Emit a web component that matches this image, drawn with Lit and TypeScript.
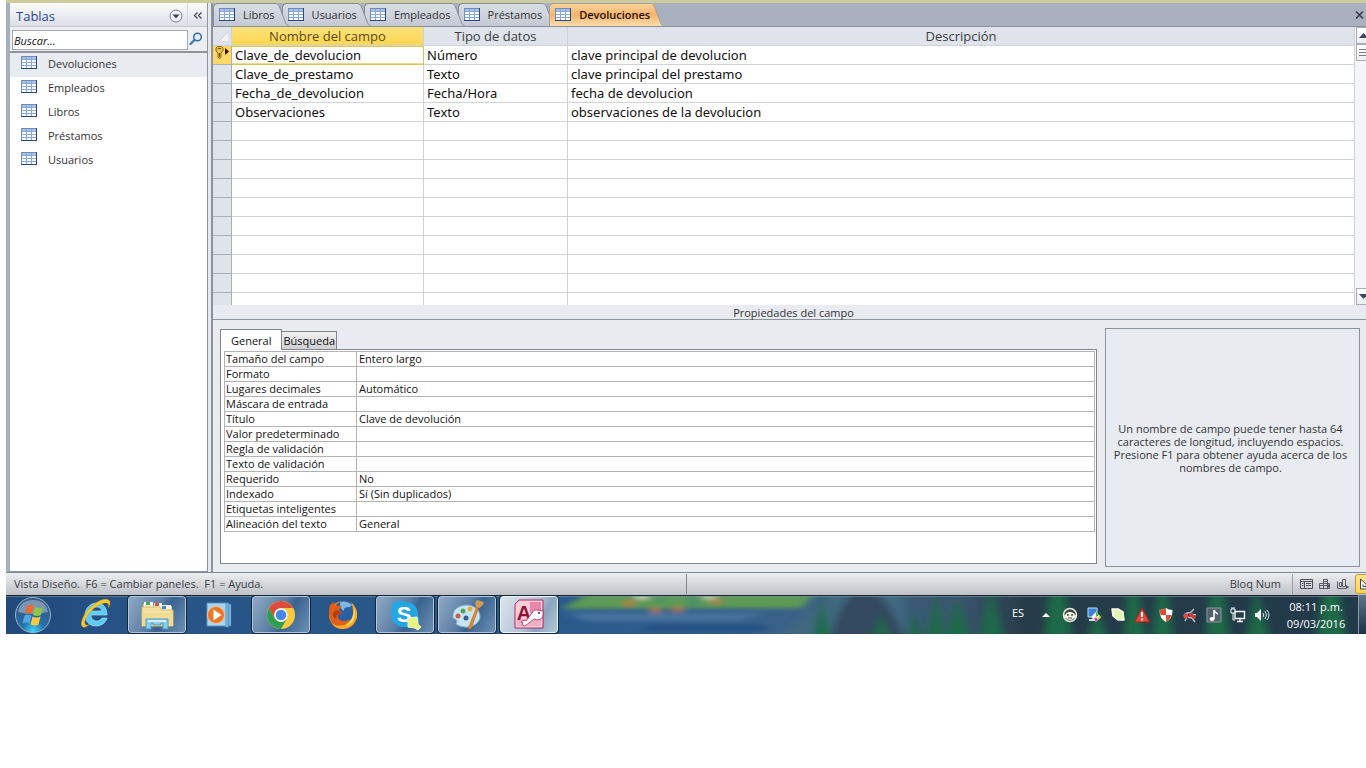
import { LitElement, html, css, svg, nothing, TemplateResult } from 'lit';
import { customElement, property, state } from 'lit/decorators.js';
import { classMap } from 'lit/directives/class-map.js';
import { styleMap } from 'lit/directives/style-map.js';

const tableIcon = html`
  <svg class="table-icon" width="16" height="13" viewBox="0 0 16 13" aria-hidden="true">
    <rect width="16" height="13" fill="#fbfdff" />
    <path d="M0 0h16v3H0z" fill="#a9c0e3" />
    <path d="M0 .5h16M.5 0v12" stroke="#6d8cc0" />
    <path d="M1 3.500h14M1 6.500h14M1 9.500h14M5.500 1v11M10.500 1v11" stroke="#8aa8d8" />
    <path d="M0 12.500h16M15.500 0v13" stroke="#274780" />
  </svg>
`;

const NAV_ITEMS = ['Devoluciones', 'Empleados', 'Libros', 'Préstamos', 'Usuarios'];

const DOC_TABS = ['Libros', 'Usuarios', 'Empleados', 'Préstamos', 'Devoluciones'];

const FIELDS = [
  { name: 'Clave_de_devolucion', type: 'Número', desc: 'clave principal de devolucion' },
  { name: 'Clave_de_prestamo', type: 'Texto', desc: 'clave principal del prestamo' },
  { name: 'Fecha_de_devolucion', type: 'Fecha/Hora', desc: 'fecha de devolucion' },
  { name: 'Observaciones', type: 'Texto', desc: 'observaciones de la devolucion' },
];

const EMPTY_ROWS = 10;

const PROPS = [
  { label: 'Tamaño del campo', value: 'Entero largo' },
  { label: 'Formato', value: '' },
  { label: 'Lugares decimales', value: 'Automático' },
  { label: 'Máscara de entrada', value: '' },
  { label: 'Título', value: 'Clave de devolución' },
  { label: 'Valor predeterminado', value: '' },
  { label: 'Regla de validación', value: '' },
  { label: 'Texto de validación', value: '' },
  { label: 'Requerido', value: 'No' },
  { label: 'Indexado', value: 'Sí (Sin duplicados)' },
  { label: 'Etiquetas inteligentes', value: '' },
  { label: 'Alineación del texto', value: 'General' },
];

@customElement('nav-pane')
export class NavPane extends LitElement {
  @state() private _selected = 'Devoluciones';

  render(): TemplateResult {
    return html`
      <div class="head">
        <h2>Tablas</h2>
        <button class="menu" aria-label="Filtrar tablas">
          <svg width="14" height="14" viewBox="0 0 14 14">
            <circle cx="7" cy="7" r="6" fill="#eef0f4" stroke="#7d828c" />
            <path d="M3.500 5.500h7L7 9.500z" fill="#3c4454" />
          </svg>
        </button>
        <button class="collapse" aria-label="Contraer panel">
          <svg width="10" height="9" viewBox="0 0 10 9">
            <path d="M4.500 1.500 1.500 4.500l3 3M8.500 1.500 5.500 4.500l3 3" fill="none" stroke="#3c4454" stroke-width="1.200" />
          </svg>
        </button>
      </div>
      <div class="search">
        <input type="text" placeholder="Buscar..." aria-label="Buscar" />
        <button aria-label="Buscar tabla">
          <svg width="14" height="14" viewBox="0 0 14 14">
            <path d="M1.500 12 5.500 8" stroke="#4a78b4" stroke-width="2.400" stroke-linecap="round" />
            <circle cx="8.500" cy="5" r="3.800" fill="#e4f0fb" stroke="#3a6aa8" stroke-width="1.500" />
          </svg>
        </button>
      </div>
      <nav>
        ${NAV_ITEMS.map(item => html`
          <button
            class=${classMap({ item: true, selected: item === this._selected })}
            @click=${() => (this._selected = item)}
          >
            ${tableIcon}<span>${item}</span>
          </button>
        `)}
      </nav>
    `;
  }

  static styles = css`
    :host {
      display: flex;
      flex-direction: column;
      background: #fff;
      border: 1px solid #8e949f;
      border-left: 4px solid #a7aebd;
      border-top: 0;
    }

    button {
      font: inherit;
      color: inherit;
      background: none;
      border: 0;
      padding: 0;
      display: flex;
      align-items: center;
      justify-content: center;
    }

    .head {
      display: flex;
      align-items: stretch;
      height: 24px;
      background: linear-gradient(#fbfbfc, #dcdfe6);
      border-bottom: 1px solid #c2c7d0;
      box-sizing: border-box;
    }

    h2 {
      flex: 1;
      margin: 0;
      padding-left: 6px;
      font-size: 13px;
      font-weight: 400;
      line-height: 26px;
      color: #24478f;
    }

    .menu,
    .collapse {
      padding-top: 2px;
    }

    .menu {
      width: 22px;
    }

    .collapse {
      width: 20px;
      border-left: 1px solid #d5d8de;
    }

    .search {
      display: flex;
      height: 24px;
      padding: 3px 3px 1px 2px;
      box-sizing: border-box;
      background: #eceef2;
    }

    .search input {
      flex: 1;
      min-width: 0;
      box-sizing: border-box;
      border: 1px solid #a3a9b4;
      padding: 0 1px;
      font: italic 11px 'Open Sans', sans-serif;
      background: #fff;
    }

    .search input::placeholder {
      color: #111;
      opacity: 1;
    }

    .search button {
      width: 16px;
      padding-bottom: 2px;
    }

    nav {
      display: flex;
      flex-direction: column;
      border-top: 2px solid #8d929b;
    }

    .item {
      justify-content: flex-start;
      gap: 11px;
      height: 24px;
      padding: 0 0 4px 11px;
      color: #333;
    }

    .item.selected {
      background: #e8ebf0;
    }

    .item .table-icon {
      margin-bottom: 2px;
    }
  `;
}

@customElement('doc-tabs')
export class DocTabs extends LitElement {
  @property() public active = 'Devoluciones';

  render(): TemplateResult {
    return html`
      <div class="tabs" role="tablist">
        ${DOC_TABS.map((tab, i) => {
          const active = tab === this.active;
          return html`
            <button
              role="tab"
              aria-selected=${active}
              class=${classMap({ tab: true, active })}
              style=${styleMap({ zIndex: active ? '20' : String(10 - i) })}
              @click=${() => (this.active = tab)}
            >
              <span class="body">${tableIcon}<span>${tab}</span></span>
              <svg class="edge" width="14" height="23" viewBox="0 0 14 23" aria-hidden="true">
                <defs>
                  <linearGradient id="g${i}" x2="0" y2="1">
                    ${active
                      ? svg`<stop offset="0" stop-color="#fbd3a0" /><stop offset=".5" stop-color="#f8b469" /><stop offset="1" stop-color="#fddcae" />`
                      : svg`<stop offset="0" stop-color="#d9dde5" /><stop offset="1" stop-color="#c4c9d3" />`}
                  </linearGradient>
                </defs>
                <path d="M0 0c3 0 4 2 5.500 6l4 11c1 3 2.500 6 4.500 6H0z" fill="url(#g${i})" />
                <path d="M0 .5c3 0 4 2 5.500 6l4 10.500c1 3 2.500 6 4.500 6" fill="none" stroke=${active ? '#a4a09c' : '#858c99'} />
              </svg>
            </button>
          `;
        })}
      </div>
      <button class="close" aria-label="Cerrar">
        <svg width="9" height="8" viewBox="0 0 9 8">
          <path d="M1 .500l7 7M8 .500l-7 7" stroke="#343b47" stroke-width="1.500" />
        </svg>
      </button>
    `;
  }

  static styles = css`
    :host {
      display: flex;
      justify-content: space-between;
      height: 24px;
      box-sizing: border-box;
      background: #a9b1c0;
      border-bottom: 1px solid #8b919c;
    }

    button {
      font: inherit;
      color: #333;
      background: none;
      border: 0;
      padding: 0;
    }

    .tabs {
      display: flex;
    }

    .tab {
      display: flex;
      position: relative;
      margin-right: -7px;
    }

    .tab.active {
      color: #1c1008;
      font-weight: 600;
    }

    .body {
      display: flex;
      align-items: center;
      gap: 8px;
      height: 23px;
      box-sizing: border-box;
      padding: 0 0 1px 5px;
      background: linear-gradient(#d9dde5, #c4c9d3);
      border: 1px solid #858c99;
      border-width: 1px 0 0 1px;
      border-top-left-radius: 5px;
    }

    .active .body {
      background: linear-gradient(#fbd3a0, #f8b469 50%, #fddcae);
      border-color: #a4a09c;
    }

    .close {
      display: flex;
      align-items: center;
      padding-right: 2px;
    }
  `;
}

@customElement('field-grid')
export class FieldGrid extends LitElement {
  render(): TemplateResult {
    return html`
      <div class="scroller">
        <table>
          <colgroup>
            <col class="c-sel" /><col class="c-name" /><col class="c-type" /><col />
          </colgroup>
          <thead>
            <tr>
              <th class="corner" aria-label="Seleccionar todo">
                <svg width="11" height="11" viewBox="0 0 11 11"><path d="M11 0v11H0z" fill="#f2f4f7" stroke="#c9cdd6" /></svg>
              </th>
              <th class="current">Nombre del campo</th>
              <th>Tipo de datos</th>
              <th>Descripción</th>
            </tr>
          </thead>
          <tbody>
            ${FIELDS.map((f, i) => html`
              <tr class=${i === 0 ? 'current-row' : nothing}>
                <td class="sel">${i === 0 ? this._keyMark() : nothing}</td>
                <td>${f.name}</td>
                <td>${f.type}</td>
                <td>${f.desc}</td>
              </tr>
            `)}
            ${Array.from({ length: EMPTY_ROWS }, () => html`
              <tr><td class="sel"></td><td></td><td></td><td></td></tr>
            `)}
          </tbody>
        </table>
      </div>
      <div class="scrollbar">
        <button aria-label="Subir">
          <svg width="9" height="5" viewBox="0 0 9 5"><path d="M0 5 4.500 0 9 5z" fill="#3b4763" /></svg>
        </button>
        <button class="thumb" aria-label="Desplazar">
          <svg width="9" height="7" viewBox="0 0 9 7"><path d="M0 .5h9M0 3.500h9M0 6.500h9" stroke="#777d88" /></svg>
        </button>
        <span class="track"></span>
        <button aria-label="Bajar">
          <svg width="9" height="5" viewBox="0 0 9 5"><path d="M0 0h9L4.500 5z" fill="#3b4763" /></svg>
        </button>
      </div>
    `;
  }

  private _keyMark(): TemplateResult {
    return html`
      <svg width="16" height="14" viewBox="0 0 16 14" aria-label="Clave principal">
        <path d="M2.500 .5h4l1.500 1.500v3L6 7v4.500l-1.500 1L3 11V7L1 5V2z" fill="#e9c04a" stroke="#8b6612" />
        <path d="M3 2.500h3M4.500 7v4" stroke="#6d4e0b" />
        <path d="M10 2v7l4-3.500z" fill="#3a0d0d" />
      </svg>
    `;
  }

  static styles = css`
    :host {
      display: flex;
      height: 278px;
      background: #fff;
      font-size: 13px;
    }

    .scroller {
      flex: 1;
      min-width: 0;
      overflow: hidden;
    }

    table {
      width: 100%;
      table-layout: fixed;
      border-collapse: separate;
      border-spacing: 0;
    }

    tbody {
      font-family: 'Noto Sans', sans-serif;
    }

    .c-sel {
      width: 19px;
    }

    .c-name {
      width: 192px;
    }

    .c-type {
      width: 144px;
    }

    th,
    td {
      box-sizing: border-box;
      height: 19px;
      line-height: 18px;
      padding: 0 3px;
      border-right: 1px solid #ced2da;
      border-bottom: 1px solid #d0d3d8;
      white-space: nowrap;
      color: #111;
    }

    th {
      background: #dfe3ea;
      color: #3a3d44;
      font-weight: 400;
      text-align: center;
    }

    th.current {
      background: linear-gradient(#fbe27c, #ffd64f);
      color: #5a4a20;
    }

    .corner,
    .sel {
      padding: 0;
      background: #dfe3ea;
      border-color: #a9aeb9;
      line-height: 0;
    }

    .corner {
      border-color: #ced2da;
      padding-left: 3px;
    }

    .current-row .sel {
      background: #ffd966;
      padding-left: 2px;
      vertical-align: top;
    }

    .current-row td:nth-child(2) {
      border-color: #d8c65a;
      box-shadow: inset 0 -1px #e8dc98, inset 0 1px #d8c65a;
    }

    .scrollbar {
      display: flex;
      flex-direction: column;
      width: 11px;
      overflow: hidden;
      background: #f3f5f8;
      padding-left: 1px;
      box-sizing: border-box;
    }

    .scrollbar button {
      display: flex;
      align-items: center;
      width: 17px;
      height: 17px;
      padding: 0 2px;
      box-sizing: border-box;
      background: linear-gradient(#fff, #eceef2);
      border: 1px solid #a9adb6;
    }

    .track {
      flex: 1;
    }
  `;
}

@customElement('field-properties')
export class FieldProperties extends LitElement {
  @state() private _tab = 'General';

  render(): TemplateResult {
    return html`
      <h3>Propiedades del campo</h3>
      <div class="area">
        <section>
          <div class="tabs" role="tablist">
            ${['General', 'Búsqueda'].map(t => html`
              <button
                role="tab"
                aria-selected=${t === this._tab}
                class=${classMap({ on: t === this._tab })}
                @click=${() => (this._tab = t)}
              >${t}</button>
            `)}
          </div>
          <div class="box">
            <table>
              <tbody>
                ${PROPS.map((p, i) => html`
                  <tr>
                    <th scope="row"><label for="p${i}">${p.label}</label></th>
                    <td><input id="p${i}" type="text" .value=${p.value} /></td>
                  </tr>
                `)}
              </tbody>
            </table>
          </div>
        </section>
        <aside>
          <p>
            Un nombre de campo puede tener hasta 64 caracteres de longitud,
            incluyendo espacios. Presione F1 para obtener ayuda acerca de los
            nombres de campo.
          </p>
        </aside>
      </div>
    `;
  }

  static styles = css`
    :host {
      display: flex;
      flex-direction: column;
      background: #e8ebf0;
      color: #333;
    }

    h3 {
      margin: 0;
      height: 14px;
      line-height: 16px;
      font-size: 11px;
      font-weight: 400;
      text-align: center;
      border-bottom: 1px solid #8b939c;
      padding-left: 8px;
    }

    .area {
      flex: 1;
      display: flex;
      gap: 8px;
      padding: 8px 6px 5px 7px;
    }

    section {
      flex: 1;
      min-width: 0;
      display: flex;
      flex-direction: column;
      padding: 1px 0 3px;
    }

    .tabs {
      display: flex;
      align-items: flex-end;
      height: 20px;
    }

    .tabs button {
      height: 18px;
      padding: 0 1px;
      font: inherit;
      line-height: 17px;
      color: #111;
      background: linear-gradient(#f0f0f1, #cfd0d2);
      border: 1px solid #80878f;
      border-width: 1px 1px 0 0;
    }

    .tabs button.on {
      height: 21px;
      padding: 0 10px;
      margin-bottom: -1px;
      line-height: 19px;
      background: #fff;
      border-left-width: 1px;
      position: relative;
    }

    .box {
      flex: 1;
      padding: 1px 1px 31px 3px;
      background: #fff;
      border: 1px solid #80878f;
    }

    table {
      width: 100%;
      table-layout: fixed;
      border-collapse: separate;
      border-spacing: 0;
      border: 1px solid #b4b4b4;
      border-bottom: 0;
      box-sizing: border-box;
    }

    th,
    td {
      height: 15px;
      box-sizing: border-box;
      padding: 0 2px 0 1px;
      line-height: 14px;
      border-bottom: 1px solid #b4b4b4;
      font-weight: 400;
      text-align: left;
      white-space: nowrap;
      color: #111;
    }

    th {
      width: 132px;
      border-right: 1px solid #b4b4b4;
    }

    input {
      display: block;
      width: 100%;
      height: 14px;
      box-sizing: border-box;
      border: 0;
      padding: 0 1px;
      font: inherit;
      line-height: 14px;
      color: inherit;
      background: none;
    }

    aside {
      flex: 0 0 255px;
      box-sizing: border-box;
      display: flex;
      align-items: center;
      padding: 0 8px 0 4px;
      border: 1px solid #8b939c;
    }

    p {
      flex: 1;
      margin: 0;
      line-height: 13px;
      text-align: center;
    }
  `;
}

@customElement('status-bar')
export class StatusBar extends LitElement {
  render(): TemplateResult {
    return html`
      <span class="view">Vista Diseño.&nbsp; F6 = Cambiar paneles.&nbsp; F1 = Ayuda.</span>
      <span class="locks">Bloq Num</span>
      <div class="views">
        <button aria-label="Vista Hoja de datos">
          <svg width="13" height="12" viewBox="0 0 13 12"><path d="M.5 1.500h12v9H.5zM1 3.500h11M4.500 4v6M6 5.500h5M6 7.500h5M2 5.500h1.500M2 7.500h1.500" fill="none" stroke="#4a4f5a" /></svg>
        </button>
        <button aria-label="Vista Tabla dinámica">
          <svg width="12" height="12" viewBox="0 0 12 12"><path d="M4.500 1.500h4v9h-8v-5h10v5h-3M.5 7.500h8M4.500 1v9M4.500 3.500h4" fill="none" stroke="#5a5f69" /><path d="m8 5 3 3-3 3z" fill="#4a4f5a" /></svg>
        </button>
        <button aria-label="Vista Gráfico dinámico">
          <svg width="12" height="12" viewBox="0 0 12 12"><path d="M.5 3.500v7h9M2.500 4.500h2v4h-2zM5.500 1.500h3v7h-3z" fill="none" stroke="#5a5f69" /><path d="m9 7 3 2-3 2z" fill="#4a4f5a" /></svg>
        </button>
        <button class="on" aria-label="Vista Diseño">
          <svg width="16" height="14" viewBox="0 0 16 14"><path d="M1.500 2v10h11z" fill="#f8f8f4" stroke="#3f4654" /><path d="M4 7.500v2h3" fill="none" stroke="#3f4654" /><path d="m6 8 7-6 2 2-7 5z" fill="#5a6270" /></svg>
        </button>
      </div>
    `;
  }

  static styles = css`
    :host {
      display: flex;
      align-items: center;
      height: 23px;
      box-sizing: border-box;
      background: linear-gradient(#eceef0, #bec1c6);
      border-top: 1px solid #7f8a97;
      color: #3a3d44;
      overflow: hidden;
    }

    .view {
      flex: 0 0 50%;
      box-sizing: border-box;
      padding-left: 8px;
      line-height: 20px;
    }

    .locks {
      flex: 1;
      text-align: right;
      padding-right: 11px;
      line-height: 20px;
      border-left: 1px solid #80868f;
    }

    .views {
      display: flex;
      align-items: center;
      box-sizing: border-box;
      width: 74px;
      gap: 6px;
      padding-left: 7px;
      border-left: 1px solid #9a9fa8;
    }

    button {
      display: flex;
      flex: none;
      padding: 0;
      border: 0;
      background: none;
    }

    .on {
      padding: 2px 3px;
      background: linear-gradient(#ffe68f, #ffd350);
      border: 1px solid #c2953a;
      border-radius: 3px;
    }
  `;
}

const APPS = [
  {
    name: 'Internet Explorer',
    open: false,
    icon: svg`
      <path d="M29 18H13c0 4 3 6 6 6 2 0 4-1 5-3h5c-2 6-6 8-11 8-7 0-11-5-11-11S12 6 18 6c8 0 11 5 11 12zm-5-4c-1-3-3-4-5-4-3 0-5 1-6 4z" fill="#5ccbf5" stroke="#b4ecff" stroke-width=".6" />
      <path d="M5 30C1 28 5 17 13 10 21 2 31 0 32 5c.3 2-.6 4-1.500 5.500 1-4-1-5-4-4.500C17 8 5 20 7 27c.5 1.500 2 1.500 4 .5-2 2-4 3-6 2.500z" fill="#f6c92e" stroke="#d59a17" stroke-width=".5" />`,
  },
  {
    name: 'Explorador de Windows',
    open: true,
    icon: svg`
      <path d="M3 7h9l2 2h18v19H3z" fill="#e8cc75" />
      <path d="M4 5h9v7H4zM14 6h8v6h-8zM22 8h9v5h-9z" fill="#f6f8fa" />
      <path d="M6 5h4v3H6z" fill="#4da44a" /><path d="M15 6h4v3h-4z" fill="#d7503c" /><path d="M22 9h4v3h-4z" fill="#3d8cc8" />
      <path d="M2 10h18l2 3h11v16H2z" fill="#f4e3a0" stroke="#d7b95c" />
      <path d="M2 16h31v13H2z" fill="#f0dc94" />
      <path d="M6 32V22h22v10h-5v-6h-2v2h-8v-2h-2v6z" fill="#8fcdec" stroke="#4d9cc6" />
      <path d="M8 23h18v2H8z" fill="#d3f1fc" />`,
  },
  {
    name: 'Reproductor de Windows Media',
    open: false,
    icon: svg`
      <path d="M26 7h3v22h-3zM23 6h4v24h-4z" fill="#87c6ea" stroke="#3e7aa8" stroke-width=".6" />
      <path d="M5 6h19v23H5z" fill="#a7d4ee" stroke="#5a94bc" />
      <circle cx="14" cy="18" r="8.500" fill="#ed7626" stroke="#fac190" />
      <path d="M11.500 12.500v11l8-5.500z" fill="#fff" />`,
  },
  {
    name: 'Google Chrome',
    open: true,
    icon: svg`
      <circle cx="17" cy="18" r="14" fill="#f9ca3e" />
      <path d="M4.900 11A14 14 0 0 1 29.100 11H17a7 7 0 0 0-6 10.500z" fill="#dd4b3e" />
      <path d="M4.900 11 11 21.500A7 7 0 0 0 23 21.500L17 32A14 14 0 0 1 4.900 11z" fill="#2f9e55" />
      <circle cx="17" cy="18" r="6.700" fill="#fff" /><circle cx="17" cy="18" r="5.300" fill="#4687e8" />`,
  },
  {
    name: 'Mozilla Firefox',
    open: false,
    icon: svg`
      <circle cx="17" cy="18" r="14" fill="#ee7a20" />
      <circle cx="19" cy="14" r="10.500" fill="#2a5fa3" />
      <path d="M14 5q7-2 12 3-2 3-5 2-4 1-3 4-4-1-4-9z" fill="#7fb9e2" />
      <path d="M4 8q2-1 3-3 1 3 3 4 4-1 6 1-3 1-3 4l4 2-5 2q-1 5 4 6 4 1 7-2-1 6-6 8-7 1-11-5Q1 16 4 8z" fill="#e25e18" />
      <path d="M25 5q7 6 6 15-3 11-14 12-7 0-11-5 9 4 16-1 6-5 5-12 0-5-2-9z" fill="#f8a927" />
      <path d="M28 12q2 7-1 12-3 4-7 5 8-7 8-17z" fill="#fde06a" />
      <path d="M7 17q1-4 5-4v1l4 2-5 2-1 4q-3-1-3-5z" fill="#b43d12" />`,
  },
  {
    name: 'Skype',
    open: true,
    icon: svg`
      <path d="M4 13Q2 5 10 4q4-1 7 1 9 0 12 7 1 3 1 7 3 5-1 10-5 4-10 1-10 1-14-6-2-4-2-8z" fill="#22a7e5" />
      <text x="16" y="25" text-anchor="middle" font-size="22" font-weight="700" fill="#fff" font-family="Liberation Sans, sans-serif">S</text>
      <path d="m20 21 9-1 1 7 3 3-3 3-3-2-7-1z" fill="#e7f67c" stroke="#f9ffd5" />`,
  },
  {
    name: 'Paint',
    open: true,
    icon: svg`
      <path d="M3 21Q2 12 11 9q10-3 17 4 5 8-2 14-7 5-16 2l-4-2q3-4-3-6z" fill="#c8e4f4" stroke="#86b4d3" />
      <circle cx="8" cy="19" r="2.500" fill="#d4574a" /><circle cx="13" cy="14" r="2.500" fill="#55a653" /><circle cx="20" cy="12" r="2.500" fill="#e5b13c" /><circle cx="16" cy="21" r="2.500" fill="#385f8d" />
      <path d="M18 32 27 9l2 1-8 22z" fill="#e68b2c" stroke="#a75b15" stroke-width=".5" /><path d="M26 10q-2-4 1-7l7 2q-1 4-5 6z" fill="#d19a55" />`,
  },
  {
    name: 'Microsoft Access',
    open: true,
    active: true,
    icon: svg`
      <path d="M7 3h24v28H3V7z" fill="#f8ced9" stroke="#b92563" />
      <path d="M18 5h11v11H18z" fill="#e987a8" />
      <path d="M5 22h24v7H5z" fill="#f0b0c4" />
      <text x="12" y="23" text-anchor="middle" font-size="20" font-weight="700" fill="#8e1238" font-family="Liberation Sans, sans-serif">A</text>
      <path d="M20 16q2-4 6-3l5 1q1 9-6 9l-3-1-9 7-3-1 1-2-2-1 3-2 2 1z" fill="#fff" stroke="#b92563" stroke-width=".8" />
      <circle cx="27" cy="16" r="1" fill="#8e1238" />`,
  },
];

const TRAY = [
  { name: 'Asistente', icon: svg`<circle cx="8" cy="8" r="6.500" fill="#3f463f" stroke="#e8e6dc" stroke-width="1.500" /><path d="M1 8h14l-1 3H2z" fill="#e8e6dc" /><ellipse cx="8" cy="9" rx="5" ry="4" fill="#f4f2e6" /><circle cx="6" cy="8" r="1" fill="#4a4e48" /><circle cx="10" cy="8" r="1" fill="#4a4e48" /><path d="M6 11h4" stroke="#4a4e48" />` },
  { name: 'Gráficos', icon: svg`<path d="M2 1h9v9H2z" fill="#3f82dc" stroke="#bcdcfa" /><path d="M3 12h6v2H3z" fill="#d8dfe8" /><path d="m10 5 5 5-5 5-5-5z" fill="#f4f6dc" /><path d="m10 5 3 3-3 2z" fill="#4caf50" /><path d="m13 8 2 2-3 3z" fill="#e7c031" /><path d="m10 10 2 3-2 2-2-3z" fill="#c34dab" />` },
  { name: 'Ahorro de energía', icon: svg`<path d="M2 2h6l5 3 1 8H8L3 9z" fill="#e2f6ae" stroke="#fafff0" stroke-width="1.500" stroke-linejoin="round" />` },
  { name: 'Advertencia', icon: svg`<path d="M8 1 15.500 15H.5z" fill="#e0483a" stroke="#a82318" /><path d="M7 5h2v5H7zM7 11.500h2v2H7z" fill="#fff" />` },
  { name: 'Seguridad', icon: svg`<path d="M1.500 3q4 0 6.500-2 2.500 2 6.500 2 0 9-6.500 12Q1.500 12 1.500 3z" fill="#fff" /><path d="M1.500 3q4 0 6.500-2v7H2.500zM8 8h5.500Q12 13 8 15z" fill="#e24c35" />` },
  { name: 'Red social', icon: svg`<path d="M2 9q2-4 6-3l4-4M3 14l2-4 5 1 3 4M8 7l6 1" fill="none" stroke="#b9bfc1" stroke-width="1.500" /><circle cx="4" cy="9" r="2.500" fill="#dc4b43" /><circle cx="9" cy="8" r="2" fill="#d13c36" /><circle cx="12" cy="10" r="2" fill="#d13c36" />` },
  { name: 'Audio', icon: svg`<path d="M1 1h14v14H1z" fill="#53616c" stroke="#8a99a5" /><path d="M8 12V3q1 3 4 4" fill="none" stroke="#fff" stroke-width="1.500" /><ellipse cx="6" cy="12" rx="2.500" ry="2" fill="#fff" />` },
  { name: 'Red', icon: svg`<path d="M5 4.500h9.500v7H5zM7 14.500h6M10 12v2" fill="#263c48" stroke="#f4f6f8" stroke-width="1.400" /><path d="M1 2h4v4H1zM3 6v7h2M2 0v2M4 0v2" fill="none" stroke="#f4f6f8" />` },
  { name: 'Volumen', icon: svg`<path d="M1 6h2l4-4v12L3 10H1z" fill="#f7f8f9" /><path d="M9 6q1.500 2 0 4M11 4q3 4 0 8M13 3q4 5 0 10" fill="none" stroke="#dde3e7" />` },
];

@customElement('task-bar')
export class TaskBar extends LitElement {
  render(): TemplateResult {
    return html`
      <svg class="wallpaper" viewBox="0 0 1360 39" preserveAspectRatio="none" aria-hidden="true">
        <defs>
          <linearGradient id="sky"><stop offset="0" stop-color="#21497a" /><stop offset=".1" stop-color="#285488" /><stop offset=".42" stop-color="#2a5a8c" /><stop offset=".58" stop-color="#3b6288" /><stop offset=".7" stop-color="#3c5570" /><stop offset=".75" stop-color="#263c48" /><stop offset="1" stop-color="#22394a" /></linearGradient>
          <filter id="soft" x="-5%" y="-50%" width="110%" height="200%"><feGaussianBlur stdDeviation="4 2" /></filter>
        </defs>
        <path d="M0 0h1360v39H0z" fill="url(#sky)" />
        <g filter="url(#soft)">
          <path d="M555 14 590-6h222l-16 19z" fill="#5c9a55" />
          <path d="M630 0h12v4h-12zM698 0h10v4h-10z" fill="#d6dfc8" />
          <path d="M618 6h10v5h-10zM645 13h9v6h-9zM667 12h9v5h-9zM706 4h8v5h-8z" fill="#c3703a" />
          <path d="M680 2h14v9h-14zM650 3h10v5h-10z" fill="#4a9068" />
          <path d="M560 18h200l-30 8H580z" fill="#46739e" />
          <path d="M640 30h120v6H640z" fill="#235084" />
          <path d="M770 45 810 10 830-5h70v50z" fill="#41677f" />
          <path d="M825 45q10-50 35-50 18 0 40 50z" fill="#30485f" />
          <path d="M806 45 816 2l9 43zM866 45l9-28 9 28zM902 45l6-34 8 34zM920 45l10-48 10 48zM940 45l10-44 16 44zM974 45l10-55 14 55zM1038 45l6-55h14l8 55zM1082 45l8-34 12 34zM1118 45l4-55h10l8 55zM1146 45l6-55h8l8 55zM1200 45l4-45h14l6 45zM1240 45l10-55 14 55zM1310 45l8-55h14l8 55z" fill="#1b6a47" />
        </g>
        <path d="M0 .5h1360" stroke="#18232e" /><path d="M0 1.500h1360" stroke="#8294a3" stroke-opacity=".6" />
      </svg>
      <button class="start" aria-label="Inicio">
        <svg width="38" height="38" viewBox="0 0 38 38">
          <defs><radialGradient id="orb" cy=".95" r=".8"><stop offset="0" stop-color="#41d5fa" /><stop offset=".4" stop-color="#236fa9" /><stop offset="1" stop-color="#365b85" /></radialGradient></defs>
          <circle cx="19" cy="19" r="17.500" fill="url(#orb)" stroke="#9ab5cd" />
          <path d="M4 16Q6 4 19 4t15 12Q19 20 4 16z" fill="#fff" fill-opacity=".35" />
          <path d="M13 10q4-2 7 0l-2 8q-3-2-7 0z" fill="#ea6a32" /><path d="M21 11q4 2 8 0l-2 8q-4 2-8 0z" fill="#91c44a" />
          <path d="M10.500 19.500q3-2 7 0l-2 8q-3-2-7 0z" fill="#53a8e2" /><path d="M18.500 20.500q4 2 8 0l-2 8q-4 2-8 0z" fill="#fbc93d" />
        </svg>
      </button>
      <div class="apps">
        ${APPS.map(app => html`
          <button class=${classMap({ app: true, open: app.open, active: !!app.active })} aria-label=${app.name}>
            <svg width="34" height="36" viewBox="0 0 34 36">${app.icon}</svg>
          </button>
        `)}
      </div>
      <div class="tray">
        <button class="lang" aria-label="Idioma">ES</button>
        <button class="cell" aria-label="Mostrar iconos ocultos">
          <svg width="8" height="4" viewBox="0 0 8 4"><path d="M0 4 4 0l4 4z" fill="#fff" /></svg>
        </button>
        ${TRAY.map(t => html`
          <button class="cell" aria-label=${t.name}><svg width="16" height="16" viewBox="0 0 16 16">${t.icon}</svg></button>
        `)}
        <button class="clock"><span>08:11 p.m.</span><span>09/03/2016</span></button>
        <button class="desktop" aria-label="Mostrar escritorio"></button>
      </div>
    `;
  }

  static styles = css`
    :host {
      display: flex;
      position: relative;
      height: 39px;
      color: #fff;
      overflow: hidden;
    }

    .wallpaper {
      position: absolute;
      inset: 0;
      width: 100%;
      height: 100%;
    }

    button {
      position: relative;
      display: flex;
      align-items: center;
      justify-content: center;
      padding: 0;
      border: 0;
      background: none;
      font: inherit;
      color: inherit;
    }

    .start {
      width: 54px;
      margin-right: 6px;
    }

    .apps {
      flex: 1;
      display: flex;
      gap: 4px;
    }

    .app {
      width: 58px;
      box-sizing: border-box;
    }

    .open {
      background: linear-gradient(120deg, #8fa9c4 0%, #5d7fa5 45%, #3a638f 60%, #6d91b5 100%);
      border: 1px solid #b3c6d8;
      border-radius: 3px;
      outline: 1px solid #12263c;
      margin: 1px 0;
    }

    .active {
      background: linear-gradient(120deg, #dbe4ed 0%, #b5c6d8 50%, #8ba5c0 70%, #b3c8da 100%);
      border-color: #eff4f8;
    }

    .tray {
      display: flex;
      align-items: stretch;
    }

    .lang {
      width: 32px;
      height: 34px;
    }

    .cell {
      width: 24px;
      padding-top: 1px;
    }

    .clock {
      flex-direction: column;
      width: 84px;
      line-height: 17px;
    }

    .desktop {
      width: 8px;
      box-sizing: border-box;
      background: linear-gradient(#60758a, #1d3144);
      border-left: 1px solid #8798a8;
    }
  `;
}

@customElement('app-root')
export class AppRoot extends LitElement {
  render(): TemplateResult {
    return html`
      <div class="workspace">
        <nav-pane></nav-pane>
        <main>
          <doc-tabs></doc-tabs>
          <field-grid></field-grid>
          <field-properties></field-properties>
        </main>
      </div>
      <status-bar></status-bar>
      <task-bar></task-bar>
    `;
  }

  static styles = css`
    :host {
      display: block;
      min-height: 100vh;
      box-sizing: border-box;
      padding-left: 6px;
      background: #fff;
      font-family: 'Open Sans', 'Noto Sans', sans-serif;
      font-size: 11px;
      color: #333;
      overflow: hidden;
    }

    .workspace {
      display: flex;
      gap: 3px;
      border-top: 3px solid #cdcc9c;
      background: #e6e9ee;
    }

    nav-pane {
      flex: 0 0 202px;
      box-sizing: border-box;
    }

    main {
      flex: 1;
      min-width: 0;
      display: flex;
      flex-direction: column;
      border-left: 2px solid #8c929e;
    }
  `;
}
